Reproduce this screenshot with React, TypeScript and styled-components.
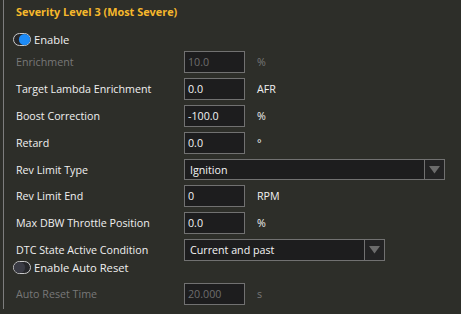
import styled, { createGlobalStyle } from "styled-components";

const GlobalStyle = createGlobalStyle`
  html, body {
    margin: 0;
    background: #2d2e29;
  }
  body {
    font-family: "Open Sans", "Noto Sans", sans-serif;
    font-size: 10.7px;
    color: #eeeeee;
  }
`;

const Toggle = ({ on }: { on: boolean }) => (
  <svg width="18" height="13" viewBox="0 0 18 13">
    <rect x="0.5" y="0.5" width="17" height="12" rx="6" fill="#26272a" stroke="#c9c9c9" />
    <circle cx={on ? 11.5 : 6.5} cy="6.5" r="5.6" fill={on ? "#1d8cf8" : "#3a3b44"} />
  </svg>
);

const Arrow = () => (
  <svg width="11" height="8" viewBox="0 0 11 8">
    <polygon points="0,0 11,0 5.5,7.5" fill="#6c6c6c" />
  </svg>
);

type FieldProps = { label: string; value: string; unit?: string; disabled?: boolean };

const Field = ({ label, value, unit, disabled }: FieldProps) => (
  <Row>
    <Label $disabled={disabled}>{label}</Label>
    <Input $disabled={disabled}>{value}</Input>
    {unit && <Unit $disabled={disabled}>{unit}</Unit>}
  </Row>
);

type SelectProps = { label: string; value: string; width: number; height: number };

const Select = ({ label, value, width, height }: SelectProps) => (
  <Row $height={height}>
    <Label>{label}</Label>
    <Combo style={{ width, height }}>
      <ComboText>{value}</ComboText>
      <ComboButton>
        <Arrow />
      </ComboButton>
    </Combo>
  </Row>
);

export default function App() {
  return (
    <>
      <GlobalStyle />
      <Panel>
        <Title>Severity Level 3 (Most Severe)</Title>
        <Form>
          <CheckRow $after={1}>
            <Toggle on />
            <span>Enable</span>
          </CheckRow>
          <Field label="Enrichment" value="10.0" unit="%" disabled />
          <Field label="Target Lambda Enrichment" value="0.0" unit="AFR" />
          <Field label="Boost Correction" value="-100.0" unit="%" />
          <Field label="Retard" value="0.0" unit="°" />
          <Select label="Rev Limit Type" value="Ignition" width={261} height={21} />
          <Field label="Rev Limit End" value="0" unit="RPM" />
          <Field label="Max DBW Throttle Position" value="0.0" unit="%" />
          <Select label="DTC State Active Condition" value="Current and past" width={201} height={22} />
          <CheckRow $before={-5} $after={5}>
            <Toggle on={false} />
            <span>Enable Auto Reset</span>
          </CheckRow>
          <Field label="Auto Reset Time" value="20.000" unit="s" disabled />
        </Form>
      </Panel>
    </>
  );
}

const Panel = styled.div`
  margin-left: 3px;
  height: 309px;
  border-left: 1px solid #7d7d7d;
  padding-left: 9px;
`;

const Title = styled.div`
  height: 24px;
  line-height: 24px;
  padding-left: 3px;
  margin-bottom: 9px;
  font-weight: 700;
  font-size: 10.9px;
  color: #f6b82c;
`;

const Form = styled.div`
  display: flex;
  flex-direction: column;
  gap: 5px;
`;

const CheckRow = styled.div<{ $before?: number; $after?: number }>`
  display: flex;
  align-items: center;
  gap: 3px;
  height: 12px;
  margin-top: ${(p) => p.$before ?? 0}px;
  margin-bottom: ${(p) => p.$after ?? 0}px;
  color: #f0f0f0;
  font-size: 11.2px;
`;

const Row = styled.div<{ $height?: number }>`
  display: flex;
  align-items: center;
  height: ${(p) => p.$height ?? 22}px;
  padding-left: 3px;
`;

const Label = styled.div<{ $disabled?: boolean }>`
  width: 168px;
  color: ${(p) => (p.$disabled ? "#787878" : "#f0f0f0")};
`;

const Input = styled.div<{ $disabled?: boolean }>`
  box-sizing: border-box;
  width: 61px;
  height: 22px;
  line-height: 20px;
  padding-left: 3px;
  border: 1px solid #717171;
  background: #1d1d1e;
  color: ${(p) => (p.$disabled ? "#6e6e6e" : "#f4f4f4")};
`;

const Unit = styled.div<{ $disabled?: boolean }>`
  margin-left: 12px;
  color: ${(p) => (p.$disabled ? "#787878" : "#f0f0f0")};
`;

const Combo = styled.div`
  box-sizing: border-box;
  display: flex;
  border: 1px solid #717171;
  background: #1d1d1e;
`;

const ComboText = styled.div`
  flex: 1;
  display: flex;
  align-items: center;
  padding-left: 5px;
  color: #f4f4f4;
`;

const ComboButton = styled.div`
  width: 19px;
  display: flex;
  align-items: center;
  justify-content: center;
  border-left: 1px solid #717171;
  background: #232324;
`;
